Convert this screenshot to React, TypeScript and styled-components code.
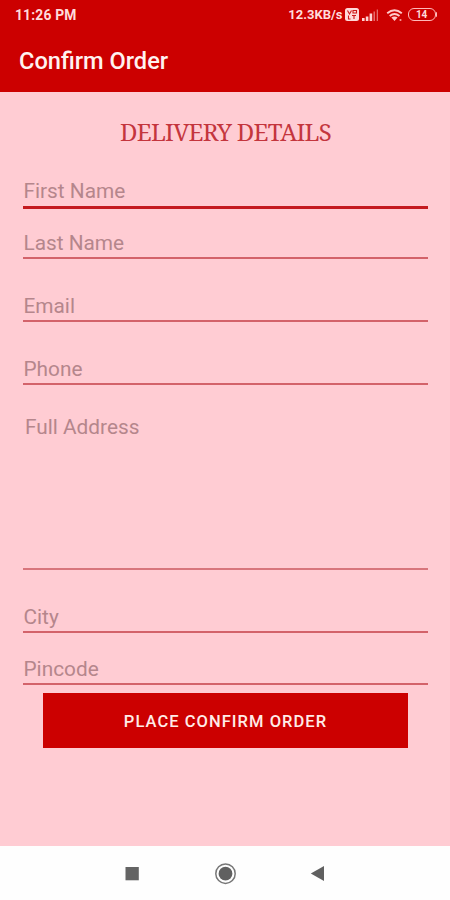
import React from "react";
import styled, { createGlobalStyle } from "styled-components";

const GlobalStyle = createGlobalStyle`
  * { box-sizing: border-box; }
  body { margin: 0; background: #ffcdd2; }
`;

const Screen = styled.div`
  display: flex;
  flex-direction: column;
  width: 450px;
  height: 900px;
  overflow: hidden;
  background: #ffccd3;
  font-family: Roboto, "Liberation Sans", sans-serif;
`;

const StatusBar = styled.div`
  display: flex;
  align-items: center;
  height: 30px;
  padding: 0 13px 1px 15px;
  background: #cc0000;
  color: #ffdcdc;
  font-size: 13.8px;
  font-weight: 700;
  letter-spacing: 0.2px;
`;

const StatusIcons = styled.div`
  display: flex;
  align-items: center;
  margin-left: auto;
`;

const NetworkSpeed = styled.span`
  margin-right: 2px;
  font-size: 13px;
  letter-spacing: 0;
`;

const AppBar = styled.header`
  display: flex;
  align-items: center;
  height: 62px;
  padding: 0 19px;
  background: #cc0000;
`;

const Title = styled.h1`
  margin: 0;
  color: #fff2f0;
  font-size: 23.6px;
  font-weight: 500;
  line-height: 30px;
`;

const Form = styled.form`
  display: flex;
  flex: 1;
  flex-direction: column;
  padding: 24px 22px 0 23px;
`;

const Heading = styled.h2`
  margin: 0;
  color: #c4353d;
  font-family: "Noto Serif", "Liberation Serif", serif;
  font-size: 24px;
  font-weight: 400;
  line-height: 32px;
  letter-spacing: -0.75px;
  text-align: center;
  white-space: nowrap;
`;

const fieldStyles = `
  display: block;
  width: 100%;
  border: 0;
  border-radius: 0;
  outline: 0;
  resize: none;
  background: transparent;
  color: #7c3a41;
  font-family: inherit;
  font-size: 20.8px;
  line-height: 26px;
  &::placeholder { color: #b5868c; opacity: 1; }
`;

const Field = styled.input<{ $gap: number; $active?: boolean }>`
  ${fieldStyles}
  height: ${(p) => (p.$active ? 32 : 30)}px;
  margin-top: ${(p) => p.$gap}px;
  padding: 0 0 ${(p) => (p.$active ? 2 : 0)}px 0.5px;
  border-bottom: ${(p) => (p.$active ? "3px solid #c41a20" : "2px solid #d3626a")};
`;

const AddressField = styled.textarea`
  ${fieldStyles}
  height: 156px;
  margin-top: 29px;
  padding: 0 2px;
  border-bottom: 2px solid #d8757c;
`;

const SubmitButton = styled.button`
  height: 55px;
  margin: 8px 20px 0;
  padding: 2px 0 0;
  border: 0;
  background: #cc0000;
  color: #ffece8;
  font-family: inherit;
  font-size: 16.5px;
  font-weight: 500;
  letter-spacing: 1.05px;
`;

const NavBar = styled.nav`
  display: flex;
  align-items: center;
  justify-content: space-between;
  height: 54px;
  padding: 1px 125px 0 124px;
  background: #fefefe;
`;

const VolteIcon = () => (
  <svg width="16" height="13" viewBox="0 0 16 13">
    <rect x="0" y="0" width="14" height="13" rx="2.5" fill="#ffd9d9" />
    <path d="M2.5 2.5 4.5 6 6.5 2.5M8 5V2.5h3.5V5zM3.5 7.5v3.5h2M7 7.5h4M9 7.5V11" fill="none" stroke="#cc1717" strokeWidth="1.1" />
  </svg>
);

const SignalIcon = () => (
  <svg width="18" height="12" viewBox="0 0 18 12">
    <path d="M1 9h2.6v3H1zM4.8 7.5h2.6V12H4.8zM8.6 4.5h2.6V12H8.6z" fill="#ffd2d2" />
    <path d="M12.5 2.5H14V12h-1.5zM15.7 0.5h1.3V12h-1.3z" fill="#e56c6c" />
  </svg>
);

const WifiIcon = () => (
  <svg width="18" height="13" viewBox="0 0 18 13" fill="none" stroke="#ffcaca">
    <path d="M1.2 4.2Q8.5-1.8 15.8 4.2M3.7 7Q8.5 3 13.5 7" strokeWidth="1.9" />
    <path d="M5.4 8.6Q8.5 6.4 11.6 8.6L8.5 12z" fill="#ffcaca" stroke="none" />
    <path d="M14.5 10v2" strokeWidth="1.7" stroke="#f49292" />
  </svg>
);

const Battery = styled.div`
  display: flex;
  align-items: center;
  justify-content: center;
  width: 28px;
  height: 13px;
  border: 1.5px solid #ffb9b9;
  border-radius: 6px;
  font-size: 10px;
  line-height: 9px;
  letter-spacing: -0.3px;
`;

const BatteryTip = styled.span`
  width: 1.5px;
  height: 5px;
  border-radius: 0 2px 2px 0;
  background: #ffb9b9;
`;

const WifiSlot = styled.span`
  display: flex;
  margin: 1px 4px 0 7px;
`;

const RecentsIcon = () => (
  <svg width="16" height="16" viewBox="0 0 16 16">
    <path d="M1.5 1h13.3v13.3H1.5z" fill="#646464" />
  </svg>
);

const HomeIcon = () => (
  <svg width="22" height="22" viewBox="0 0 22 22">
    <circle cx="11.5" cy="10.7" r="9.7" fill="none" stroke="#777" strokeWidth="1.5" />
    <circle cx="11.5" cy="10.7" r="6.9" fill="#606060" />
  </svg>
);

const BackIcon = () => (
  <svg width="15" height="16" viewBox="0 0 15 16">
    <path d="M14 0v15L.8 7.5z" fill="#606060" />
  </svg>
);

export default function App() {
  return (
    <>
      <GlobalStyle />
      <Screen>
        <StatusBar>
          <span>11:26 PM</span>
          <StatusIcons>
            <NetworkSpeed>12.3KB/s</NetworkSpeed>
            <VolteIcon />
            <SignalIcon />
            <WifiSlot><WifiIcon /></WifiSlot>
            <Battery>14</Battery>
            <BatteryTip />
          </StatusIcons>
        </StatusBar>
        <AppBar>
          <Title>Confirm Order</Title>
        </AppBar>
        <Form>
          <Heading>DELIVERY DETAILS</Heading>
          <Field $gap={29} $active placeholder="First Name" />
          <Field $gap={20} placeholder="Last Name" />
          <Field $gap={33} placeholder="Email" />
          <Field $gap={33} placeholder="Phone" />
          <AddressField placeholder="Full Address" />
          <Field $gap={33} placeholder="City" />
          <Field $gap={22} placeholder="Pincode" />
          <SubmitButton type="button">PLACE CONFIRM ORDER</SubmitButton>
        </Form>
        <NavBar>
          <RecentsIcon />
          <HomeIcon />
          <BackIcon />
        </NavBar>
      </Screen>
    </>
  );
}
